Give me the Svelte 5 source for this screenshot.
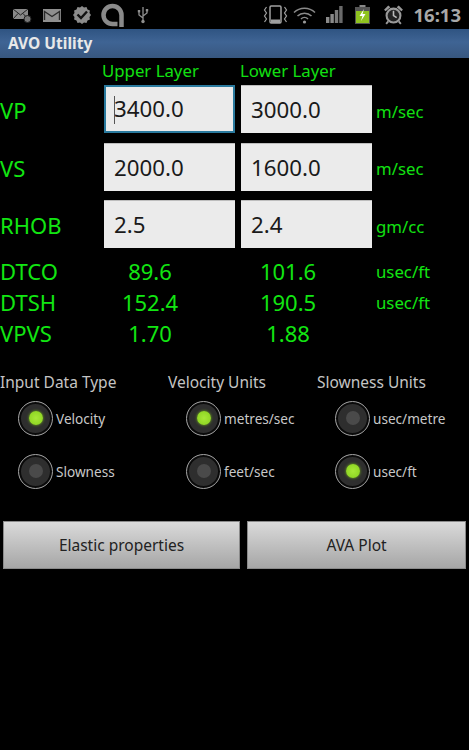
<script>
  const rows = [
    { label: 'VP', upper: '3400.0', lower: '3000.0', unit: 'm/sec', focused: true },
    { label: 'VS', upper: '2000.0', lower: '1600.0', unit: 'm/sec' },
    { label: 'RHOB', upper: '2.5', lower: '2.4', unit: 'gm/cc' }
  ];

  const results = [
    { label: 'DTCO', upper: '89.6', lower: '101.6', unit: 'usec/ft' },
    { label: 'DTSH', upper: '152.4', lower: '190.5', unit: 'usec/ft' },
    { label: 'VPVS', upper: '1.70', lower: '1.88', unit: '' }
  ];

  const groups = [
    { title: 'Input Data Type', options: [{ text: 'Velocity', on: true }, { text: 'Slowness', on: false }] },
    { title: 'Velocity Units', options: [{ text: 'metres/sec', on: true }, { text: 'feet/sec', on: false }] },
    { title: 'Slowness Units', options: [{ text: 'usec/metre', on: false }, { text: 'usec/ft', on: true }] }
  ];
</script>

<div class="screen">
  <div class="status">
    <div class="status-left">
      <svg width="20" height="16" viewBox="0 0 20 16">
        <rect x="1" y="2" width="15" height="10" fill="#8a8a8a" />
        <path d="M1 2l7.500 6L16 2M1 12l5-5.500M16 12l-5-5.500" fill="none" stroke="#222" stroke-width="1" />
        <circle cx="15.500" cy="12" r="3.500" fill="#777" stroke="#222" />
      </svg>
      <svg width="20" height="16" viewBox="0 0 20 16">
        <rect x="1" y="2" width="18" height="13" fill="#8f8f8f" />
        <path d="M2.500 13V4.500l7.500 5 7.500-5V13" fill="none" stroke="#2a2a2a" stroke-width="1.400" />
      </svg>
      <svg width="20" height="20" viewBox="0 0 20 20">
        <path d="M10 1l2 1.600 2.500-.5 1 2.300 2.400 1-.4 2.600L19 10l-1.500 2 .4 2.600-2.400 1-1 2.300-2.500-.5L10 19l-2-1.600-2.500.5-1-2.300-2.400-1 .4-2.600L1 10l1.500-2-.4-2.600 2.400-1 1-2.300 2.500.5z" fill="#8c8c8c" />
        <path d="M5.500 9.500l3.500 3.500 6-6.500" fill="none" stroke="#111" stroke-width="2.400" />
      </svg>
      <svg class="a-logo" width="26" height="26" viewBox="0 0 26 26">
        <path d="M21.500 25V13a9 9 0 1 0-9 9h5" fill="none" stroke="#8a8a8a" stroke-width="4.500" />
      </svg>
      <svg class="usb" width="12" height="18" viewBox="0 0 12 18">
        <path d="M6 1v15M6 12L2 9V6M6 10l4-3V5" fill="none" stroke="#8f8f8f" stroke-width="1.300" />
        <circle cx="6" cy="15.500" r="1.700" fill="#8f8f8f" />
        <rect x="0.800" y="4" width="2.400" height="2.400" fill="#8f8f8f" />
        <rect x="8.800" y="3" width="2.400" height="2.400" fill="#8f8f8f" />
      </svg>
    </div>
    <div class="status-right">
      <svg width="25" height="20" viewBox="0 0 25 20">
        <rect x="7" y="1" width="11" height="17" rx="1.200" fill="none" stroke="#a0a0a0" stroke-width="1.500" />
        <rect x="8" y="14.500" width="9" height="3.500" fill="#a0a0a0" />
        <path d="M3.500 2l-2 3 2 3-2 3 2 3-2 3M21.500 2l2 3-2 3 2 3-2 3 2 3" fill="none" stroke="#a0a0a0" stroke-width="1.200" />
      </svg>
      <svg class="wifi" width="23" height="18" viewBox="0 0 23 18">
        <path d="M1 6.500a15 15 0 0 1 21 0M4.500 10a10 10 0 0 1 14 0M8 13a5 5 0 0 1 7 0" fill="none" stroke="#8a8a8a" stroke-width="1.500" />
        <circle cx="11.500" cy="16" r="1.600" fill="#9a9a9a" />
      </svg>
      <svg class="signal" width="17" height="17" viewBox="0 0 17 17">
        <rect x="0" y="11" width="3.400" height="6" fill="#8a8a8a" />
        <rect x="4.400" y="8" width="3.400" height="9" fill="#8a8a8a" />
        <rect x="8.800" y="4" width="3.400" height="13" fill="#7a7a7a" />
        <rect x="13.200" y="0" width="3.400" height="17" fill="#6a6a6a" />
      </svg>
      <svg class="battery" width="15" height="19" viewBox="0 0 15 19">
        <rect x="4.500" y="0" width="6" height="2" fill="#888" />
        <rect x="0" y="2" width="15" height="17" fill="#555" />
        <rect x="1" y="6" width="13" height="12" fill="#8fc31f" />
        <path d="M9 4L4.500 11h3L6 16l4.500-7h-3z" fill="#fff" />
      </svg>
      <svg class="alarm" width="21" height="21" viewBox="0 0 20 20">
        <circle cx="10" cy="11" r="6.600" fill="#222" stroke="#9a9a9a" stroke-width="2" />
        <path d="M10 6.500V11l3 2" fill="none" stroke="#bbb" stroke-width="1.500" />
        <path d="M1 5.500L5 1.500l2 1.500-4.500 4zM19 5.500L15 1.500l-2 1.500 4.500 4z" fill="#9a9a9a" />
        <path d="M5 16.500l-2 2.500M15 16.500l2 2.500" stroke="#9a9a9a" stroke-width="1.800" />
      </svg>
      <span class="clock">16:13</span>
    </div>
  </div>

  <div class="titlebar">AVO Utility</div>

  <div class="columns">
    <span>Upper Layer</span>
    <span>Lower Layer</span>
  </div>

  <div class="inputs">
    {#each rows as row}
      <div class="input-row">
        <span class="row-label">{row.label}</span>
        <div class="field" class:focused={row.focused}>
          {#if row.focused}<i class="caret"></i>{/if}{row.upper}
        </div>
        <div class="field">{row.lower}</div>
        <span class="unit">{row.unit}</span>
      </div>
    {/each}
  </div>

  <div class="results">
    {#each results as r}
      <div class="result-row">
        <span class="result-label">{r.label}</span>
        <span class="result-value">{r.upper}</span>
        <span class="result-value">{r.lower}</span>
        <span class="result-unit">{r.unit}</span>
      </div>
    {/each}
  </div>

  <div class="groups">
    {#each groups as group}
      <div class="group">
        <div class="group-title">{group.title}</div>
        {#each group.options as opt}
          <div class="radio">
            <span class="ring"><span class="dot" class:on={opt.on}></span></span>
            <span class="radio-text">{opt.text}</span>
          </div>
        {/each}
      </div>
    {/each}
  </div>

  <div class="buttons">
    <button type="button" class="btn-left">Elastic properties</button>
    <button type="button" class="btn-right">AVA Plot</button>
  </div>
</div>

<style>
  :global(body) {
    margin: 0;
    background: #000;
  }

  .screen {
    width: 469px;
    height: 750px;
    overflow: hidden;
    background: #000;
    font-family: "Noto Sans", "Open Sans", sans-serif;
  }

  .status {
    height: 29px;
    display: flex;
    justify-content: space-between;
    align-items: center;
  }

  .status-left {
    display: flex;
    align-items: center;
    gap: 10px;
    padding-left: 12px;
  }

  .a-logo {
    margin-left: -2px;
  }

  .usb {
    margin-left: 1px;
  }

  .status-right {
    display: flex;
    align-items: center;
    padding-right: 8px;
  }

  .wifi {
    margin-left: 5px;
  }

  .signal {
    margin-left: 10px;
  }

  .battery {
    margin-left: 12px;
  }

  .alarm {
    margin-left: 13px;
  }

  .clock {
    margin-left: 9px;
    color: #a8a8a8;
    font-size: 18.5px;
    font-weight: 700;
  }

  .titlebar {
    height: 29px;
    line-height: 29px;
    padding-left: 8px;
    background: linear-gradient(#2f5482, #3f6494 45%, #38577f);
    color: #e8e8e8;
    font-size: 15.5px;
    font-weight: 700;
  }

  .columns {
    height: 27px;
    display: flex;
    padding-left: 102px;
    color: #12e012;
    font-size: 16.8px;
    line-height: 25px;
  }

  .columns span {
    width: 138px;
  }

  .inputs {
    display: flex;
    flex-direction: column;
    gap: 9.5px;
  }

  .input-row {
    height: 48px;
    display: grid;
    grid-template-columns: 104px 131px 137px 1fr;
    align-items: center;
  }

  .row-label {
    padding-top: 2px;
    color: #12e612;
    font-size: 22px;
  }

  .field {
    position: relative;
    height: 48px;
    box-sizing: border-box;
    padding-left: 10px;
    line-height: 48px;
    background: #ebebeb;
    border-top: 1px solid #bdbdbd;
    color: #1a1a1a;
    font-size: 22.3px;
  }

  .field + .field {
    margin-left: 6px;
  }

  .field.focused {
    border: 2px solid #2a7a9e;
    padding-left: 8px;
    line-height: 44px;
  }

  .caret {
    position: absolute;
    left: 8px;
    top: 9px;
    width: 1px;
    height: 28px;
    background: #555;
  }

  .unit {
    margin-left: 4px;
    padding-top: 4px;
    color: #12e012;
    font-size: 16.8px;
  }

  .results {
    margin-top: 7.5px;
  }

  .result-row {
    height: 31px;
    display: grid;
    grid-template-columns: 81px 138px 138px 1fr;
    align-items: center;
    color: #12e612;
  }

  .result-label {
    font-size: 22px;
  }

  .result-value {
    font-size: 22px;
    text-align: center;
  }

  .result-unit {
    margin-left: 19px;
    font-size: 16.8px;
    white-space: nowrap;
  }

  .groups {
    margin-top: 22px;
    display: grid;
    grid-template-columns: 168px 149px 1fr;
  }

  .group-title {
    color: #c4c4c4;
    font-size: 15.5px;
    line-height: 22px;
    margin-bottom: -1px;
    white-space: nowrap;
  }

  .radio {
    height: 53px;
    display: flex;
    align-items: center;
    gap: 3px;
    padding-left: 18px;
  }

  .ring {
    width: 33px;
    height: 33px;
    display: flex;
    align-items: center;
    justify-content: center;
    border: 1px solid #a0a0a0;
    border-radius: 50%;
    background: #2e2e2e;
    box-shadow: inset 0 0 0 2px #0a0a0a;
  }

  .dot {
    width: 14px;
    height: 14px;
    border-radius: 50%;
    background: #4a4a4a;
  }

  .dot.on {
    background: radial-gradient(circle, #a8e838, #86d01c);
    box-shadow: 0 0 3px #7ab820;
  }

  .radio-text {
    color: #c8c8c8;
    font-size: 13.6px;
    white-space: nowrap;
  }

  .buttons {
    margin-top: 23px;
    padding-left: 3px;
    display: flex;
    gap: 7px;
  }

  .buttons button {
    height: 48px;
    padding: 1px 0 0;
    border: 1px solid #8a8a8a;
    background: linear-gradient(#dadada, #a6a6a6);
    color: #222;
    font-family: inherit;
    font-size: 15.5px;
  }

  .btn-left {
    width: 237px;
  }

  .btn-right {
    width: 219px;
  }
</style>
